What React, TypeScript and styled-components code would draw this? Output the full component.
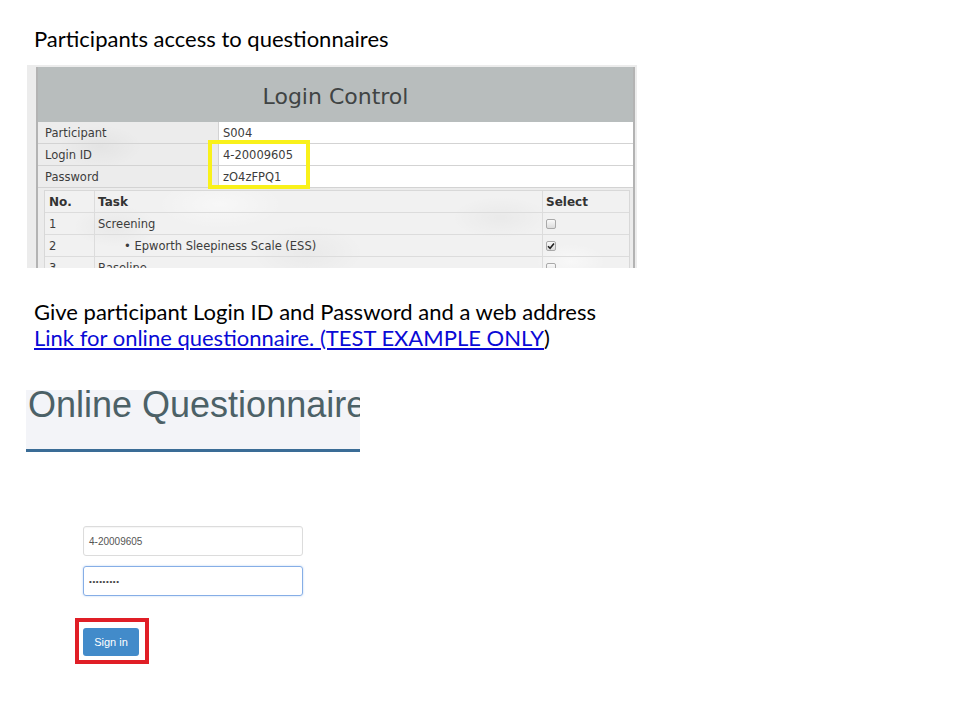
import React from "react";
import styled, { createGlobalStyle } from "styled-components";

const GlobalStyle = createGlobalStyle`
  html, body { margin: 0; padding: 0; background: #ffffff; }
  body { width: 960px; height: 720px; overflow: hidden; }
  * { box-sizing: border-box; }
`;

const Slide = styled.div`
  width: 960px;
  height: 720px;
  display: flex;
  flex-direction: column;
  align-items: flex-start;
  font-family: Lato, "Open Sans", sans-serif;
  color: #000;
  & > * { flex-shrink: 0; }
`;

const SlideText = styled.p<{ $top: number }>`
  margin: ${(p) => p.$top}px 0 0 34px;
  font-size: 22px;
  line-height: 26px;
  white-space: nowrap;
`;

const Link = styled.a`
  color: #0a0ad6;
  text-decoration: underline;
  text-underline-offset: 2px;
`;

const texture = `
  background-color: #ececec;
  background-image:
    radial-gradient(ellipse 60px 30px at 12% 40%, rgba(0,0,0,0.035), transparent 70%),
    radial-gradient(ellipse 80px 40px at 45% 70%, rgba(0,0,0,0.03), transparent 70%),
    radial-gradient(ellipse 70px 30px at 78% 30%, rgba(0,0,0,0.03), transparent 70%),
    radial-gradient(ellipse 50px 25px at 90% 80%, rgba(255,255,255,0.5), transparent 70%),
    radial-gradient(ellipse 90px 35px at 30% 15%, rgba(255,255,255,0.45), transparent 70%);
`;

const ShotFrame = styled.div`
  position: relative;
  margin: 13px 0 0 27px;
  width: 610px;
  height: 203px;
  overflow: hidden;
  padding: 2px 2px 0 9px;
  ${texture}
`;

const Panel = styled.div`
  border-left: 2px solid #b3b3b3;
  border-right: 2px solid #b3b3b3;
  min-height: 100%;
  font-family: "DejaVu Sans", Verdana, sans-serif;
  font-size: 11.5px;
  color: #3c3c3c;
`;

const PanelHeader = styled.div`
  height: 55px;
  background: #b8bdbd;
  display: flex;
  align-items: center;
  justify-content: center;
  padding-top: 4px;
  font-size: 22px;
  color: #404444;
`;

const InfoRow = styled.div`
  display: grid;
  grid-template-columns: 180px 1fr;
  height: 22px;
  border-bottom: 1px solid #d3d3d3;
`;

const InfoLabel = styled.div`
  display: flex;
  align-items: center;
  padding-left: 7px;
`;

const InfoValue = styled.div`
  display: flex;
  align-items: center;
  padding-left: 4px;
  background: #ffffff;
  border-left: 1px solid #d3d3d3;
`;

const TaskTable = styled.div`
  margin: 2px 3px 0 6px;
  border: 1px solid #d8d8d8;
  border-bottom: none;
  ${texture}
  background-color: #f1f1f1;
`;

const TaskRow = styled.div<{ $head?: boolean }>`
  display: grid;
  grid-template-columns: 50px 448px 1fr;
  height: 22px;
  border-bottom: 1px solid #dcdcdc;
  font-weight: ${(p) => (p.$head ? 700 : 400)};
  font-size: ${(p) => (p.$head ? "12px" : "11.5px")};
  color: ${(p) => (p.$head ? "#333" : "#3c3c3c")};
`;

const Cell = styled.div`
  display: flex;
  align-items: center;
  padding-left: 3px;
  border-right: 1px solid #dcdcdc;
  white-space: nowrap;
  &:last-child { border-right: none; }
`;

const NumCell = styled(Cell)`
  padding-left: 4px;
`;

const SubTask = styled.span`
  margin-left: 26px;
`;

const Check = styled.span`
  width: 10px;
  height: 10px;
  border: 1px solid #a9a9a9;
  border-radius: 2px;
  background: linear-gradient(#fafafa, #dcdcdc);
  display: inline-flex;
  align-items: center;
  justify-content: center;
`;

const Highlight = styled.div`
  position: absolute;
  left: 181px;
  top: 75px;
  width: 102px;
  height: 49px;
  border: 4px solid #f9f11a;
`;

const Banner = styled.div`
  margin: 39px 0 0 26px;
  width: 334px;
  height: 62px;
  background: #f3f4f8;
  border-bottom: 3px solid #3a6c96;
  overflow: hidden;
  padding: 1px 0 0 2px;
`;

const BannerTitle = styled.h1`
  margin: 0;
  font-family: "Liberation Sans", Arial, sans-serif;
  font-weight: 400;
  font-size: 36px;
  line-height: 28px;
  color: #4c6167;
  white-space: nowrap;
`;

const Form = styled.div`
  margin: 74px 0 0 75px;
  display: flex;
  flex-direction: column;
  align-items: flex-start;
  gap: 10px;
  font-family: "Liberation Sans", Arial, sans-serif;
`;

const Field = styled.div<{ $focus?: boolean }>`
  margin-left: 8px;
  width: 220px;
  height: 30px;
  border: 1px solid ${(p) => (p.$focus ? "#86aee6" : "#dcdcdc")};
  border-radius: 3px;
  box-shadow: ${(p) => (p.$focus ? "0 0 2px rgba(102,160,233,0.5)" : "inset 0 1px 1px rgba(0,0,0,0.04)")};
  display: flex;
  align-items: center;
  padding-left: 5px;
  font-size: 10px;
  color: #555;
`;

const Dots = styled.span`
  font-size: 8px;
  letter-spacing: 0.6px;
  color: #444;
`;

const Annotation = styled.div`
  margin-top: 12px;
  border: 4px solid #e01e26;
  padding: 6px 6px 4px 4px;
  display: flex;
`;

const Button = styled.button`
  width: 56px;
  height: 28px;
  border: none;
  border-radius: 3px;
  background: #428bca;
  color: #fff;
  font-family: "Liberation Sans", Arial, sans-serif;
  font-size: 11px;
  padding: 0;
`;

const CheckMark = () => (
  <svg width="8" height="8" viewBox="0 0 8 8">
    <path d="M1 4.2 L3.1 6.3 L7 1.5" fill="none" stroke="#222" strokeWidth="1.6" />
  </svg>
);

export default function App() {
  return (
    <>
      <GlobalStyle />
      <Slide>
        <SlideText $top={26}>Participants access to questionnaires</SlideText>
        <ShotFrame>
          <Panel>
            <PanelHeader>Login Control</PanelHeader>
            <InfoRow>
              <InfoLabel>Participant</InfoLabel>
              <InfoValue>S004</InfoValue>
            </InfoRow>
            <InfoRow>
              <InfoLabel>Login ID</InfoLabel>
              <InfoValue>4-20009605</InfoValue>
            </InfoRow>
            <InfoRow>
              <InfoLabel>Password</InfoLabel>
              <InfoValue>zO4zFPQ1</InfoValue>
            </InfoRow>
            <TaskTable>
              <TaskRow $head>
                <NumCell>No.</NumCell>
                <Cell>Task</Cell>
                <Cell>Select</Cell>
              </TaskRow>
              <TaskRow>
                <NumCell>1</NumCell>
                <Cell>Screening</Cell>
                <Cell>
                  <Check />
                </Cell>
              </TaskRow>
              <TaskRow>
                <NumCell>2</NumCell>
                <Cell>
                  <SubTask>• Epworth Sleepiness Scale (ESS)</SubTask>
                </Cell>
                <Cell>
                  <Check>
                    <CheckMark />
                  </Check>
                </Cell>
              </TaskRow>
              <TaskRow>
                <NumCell>3</NumCell>
                <Cell>Baseline</Cell>
                <Cell>
                  <Check />
                </Cell>
              </TaskRow>
            </TaskTable>
          </Panel>
          <Highlight />
        </ShotFrame>
        <SlideText $top={31}>
          Give participant Login ID and Password and a web address
          <br />
          <Link href="#">Link for online questionnaire. (TEST EXAMPLE ONLY</Link>)
        </SlideText>
        <Banner>
          <BannerTitle>Online Questionnaire</BannerTitle>
        </Banner>
        <Form>
          <Field>4-20009605</Field>
          <Field $focus>
            <Dots>•••••••••</Dots>
          </Field>
          <Annotation>
            <Button>Sign in</Button>
          </Annotation>
        </Form>
      </Slide>
    </>
  );
}
